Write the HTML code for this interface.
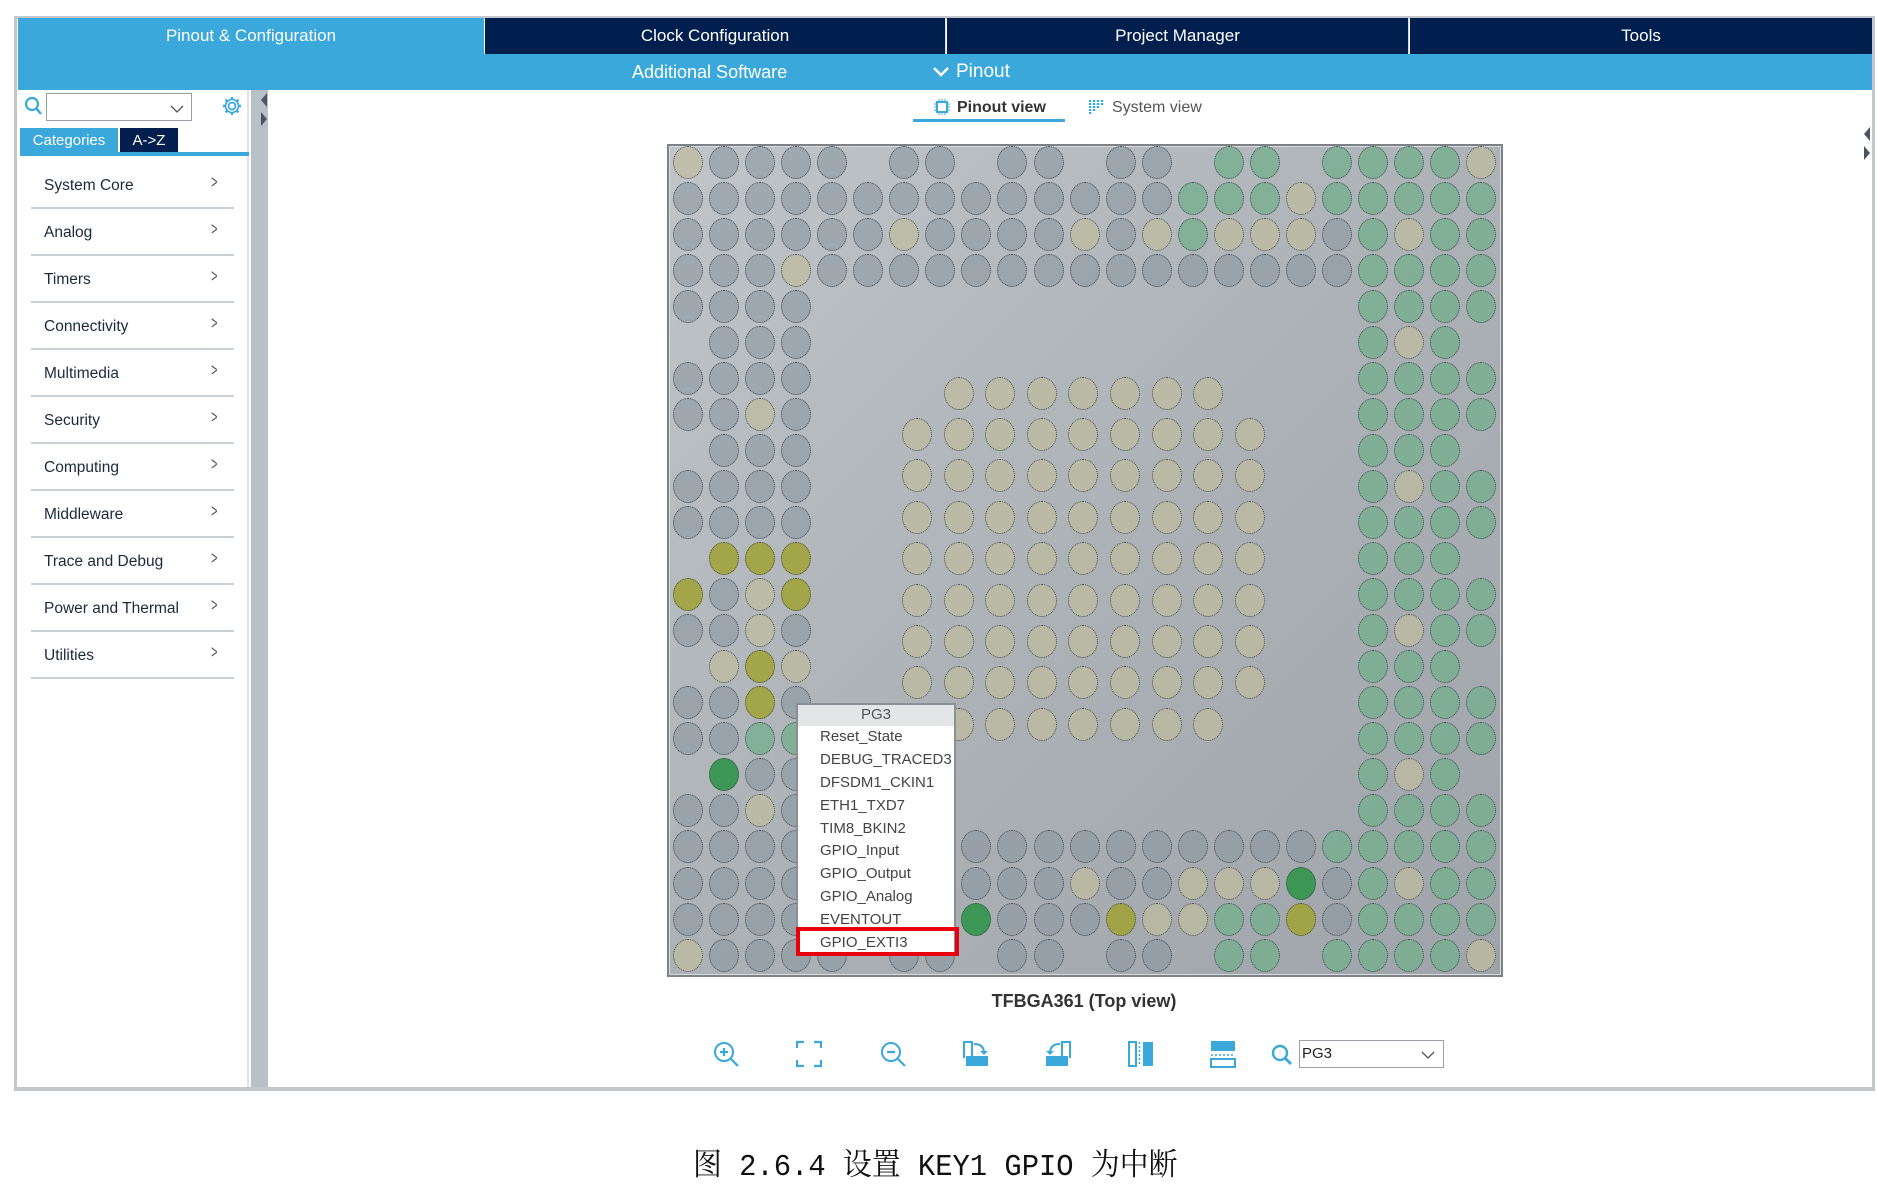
<!DOCTYPE html>
<html><head><meta charset="utf-8">
<style>
*{margin:0;padding:0;box-sizing:border-box}
body{width:1877px;height:1198px;background:#fff;position:relative;overflow:hidden;font-family:"Liberation Sans",sans-serif}
.abs{position:absolute}
#frame{left:14px;top:16px;width:1861px;height:1075px;border:3px solid #c3c7cb;border-bottom:4px solid #c3c7cb;background:#fff}
.tab{position:absolute;top:18px;height:36px;color:#fff;font-size:17px;text-align:center;line-height:36px}
.row2{left:18px;top:54px;width:1854px;height:36px;background:#3aa8db}
#left{left:18px;top:90px;width:231px;height:997px;background:#fff;border-right:2px solid #dfe3e6}
.item{position:absolute;left:13px;width:203px;height:47px;border-bottom:2px solid #c9d0d6;font-size:15.5px;color:#1b2a3a}
.item span{position:absolute;left:13px;top:15px}
.item i{position:absolute;right:14px;top:10px;font-style:normal;color:#555;font-size:18px;transform:scaleX(.6)}
#bar{left:251px;top:90px;width:17px;height:997px;background:#b7c1c8}
#chip{left:667px;top:144px;width:836px;height:833px;border:2px solid #7d8287;background:linear-gradient(135deg,#c0c5c9 0%,#acb2b6 50%,#9ea4a9 100%);box-shadow:inset 0 0 0 1px #d8dbde}
.pin{position:absolute;width:30px;height:33px;border-radius:50%;border:1.5px dotted #3f464c}
#pop{left:796px;top:703px;width:160px;height:253px;background:#fff;border:2px solid #8a9096}
#pop .h{height:21px;background:#e3e5e7;text-align:center;color:#555;font-size:15px;line-height:20px}
#pop .m{height:22.9px;padding-left:22px;font-size:15px;color:#444;line-height:22px;white-space:nowrap}
.tb{position:absolute;top:1040px}
</style></head><body>
<div id="frame" class="abs"></div>
<div class="tab" style="left:18px;width:466px;background:#3aa8db">Pinout &amp; Configuration</div>
<div class="tab" style="left:485px;width:461px;background:#001f4e;border-right:1px solid #cfd8e0">Clock Configuration</div>
<div class="tab" style="left:947px;width:462px;background:#001f4e;border-right:1px solid #cfd8e0">Project Manager</div>
<div class="tab" style="left:1410px;width:462px;background:#001f4e">Tools</div>
<div class="abs row2"></div>
<div class="abs" style="left:632px;top:62px;color:#fff;font-size:18px">Additional Software</div>
<div class="abs" style="left:932px;top:61px;color:#fff;font-size:19px"><svg width="18" height="14" style="vertical-align:middle;margin-right:6px"><path d="M2 3 L9 10 L16 3" stroke="#fff" stroke-width="2.5" fill="none"/></svg>Pinout</div>

<div id="left" class="abs">
  <svg class="abs" style="left:6px;top:6px" width="20" height="22"><circle cx="8" cy="8" r="6" stroke="#3aa8db" stroke-width="2.2" fill="none"/><path d="M12 12 L17 18" stroke="#3aa8db" stroke-width="2.5"/></svg>
  <div class="abs" style="left:28px;top:3px;width:146px;height:28px;border:1px solid #9aa0a5;background:#fff"></div>
  <svg class="abs" style="left:152px;top:14px" width="14" height="10"><path d="M1 2 L7 8 L13 2" stroke="#555" stroke-width="1.3" fill="none"/></svg>
  <svg class="abs" style="left:203px;top:5px" width="22" height="22" viewBox="0 0 22 22"><circle cx="11" cy="11" r="3.5" stroke="#3aa8db" stroke-width="1.8" fill="none"/><path d="M11 2v3M11 17v3M2 11h3M17 11h3M4.6 4.6l2.2 2.2M15.2 15.2l2.2 2.2M4.6 17.4l2.2-2.2M15.2 6.8l2.2-2.2" stroke="#3aa8db" stroke-width="2.4"/><circle cx="11" cy="11" r="6.5" stroke="#3aa8db" stroke-width="1.6" fill="none"/></svg>
  <div class="abs" style="left:2px;top:38px;width:98px;height:25px;background:#3aa8db;color:#fff;font-size:15px;text-align:center;line-height:25px">Categories</div>
  <div class="abs" style="left:102px;top:38px;width:58px;height:25px;background:#001f4e;color:#fff;font-size:15px;text-align:center;line-height:25px">A-&gt;Z</div>
  <div class="abs" style="left:2px;top:62px;width:229px;height:4px;background:#3aa8db"></div>
  <div class="item" style="top:72px"><span>System Core</span><i>&gt;</i></div>
  <div class="item" style="top:119px"><span>Analog</span><i>&gt;</i></div>
  <div class="item" style="top:166px"><span>Timers</span><i>&gt;</i></div>
  <div class="item" style="top:213px"><span>Connectivity</span><i>&gt;</i></div>
  <div class="item" style="top:260px"><span>Multimedia</span><i>&gt;</i></div>
  <div class="item" style="top:307px"><span>Security</span><i>&gt;</i></div>
  <div class="item" style="top:354px"><span>Computing</span><i>&gt;</i></div>
  <div class="item" style="top:401px"><span>Middleware</span><i>&gt;</i></div>
  <div class="item" style="top:448px"><span>Trace and Debug</span><i>&gt;</i></div>
  <div class="item" style="top:495px"><span>Power and Thermal</span><i>&gt;</i></div>
  <div class="item" style="top:542px"><span>Utilities</span><i>&gt;</i></div>
</div>
<div id="bar" class="abs"></div>
<svg class="abs" style="left:259px;top:92px" width="10" height="36"><path d="M8 1 L2 8 L8 15Z" fill="#4a5560"/><path d="M2 20 L8 27 L2 34Z" fill="#4a5560"/></svg>
<svg class="abs" style="left:1862px;top:126px" width="10" height="36"><path d="M8 1 L2 8 L8 15Z" fill="#4a5560"/><path d="M2 20 L8 27 L2 34Z" fill="#4a5560"/></svg>

<svg class="abs" style="left:934px;top:99px" width="16" height="16"><rect x="3" y="3" width="10" height="10" fill="none" stroke="#3aa8db" stroke-width="2"/><path d="M5 0v3M8 0v3M11 0v3M5 13v3M8 13v3M11 13v3M0 5h3M0 8h3M0 11h3M13 5h3M13 8h3M13 11h3" stroke="#3aa8db"/></svg>
<div class="abs" style="left:957px;top:99px;font-size:16px;font-weight:bold;color:#333">Pinout view</div>
<div class="abs" style="left:913px;top:119px;width:152px;height:3px;background:#3aa8db"></div>
<svg class="abs" style="left:1089px;top:99px" width="16" height="16"><path d="M1 1v14M5 1v11M9 1v8M13 1v5" stroke="#3aa8db" stroke-width="2.5" stroke-dasharray="2 1"/></svg>
<div class="abs" style="left:1112px;top:99px;font-size:16px;color:#555">System view</div>

<div id="chip" class="abs"></div>
<div id="pins"></div>

<div id="pop" class="abs">
  <div class="h">PG3</div>
  <div class="m">Reset_State</div>
  <div class="m">DEBUG_TRACED3</div>
  <div class="m">DFSDM1_CKIN1</div>
  <div class="m">ETH1_TXD7</div>
  <div class="m">TIM8_BKIN2</div>
  <div class="m">GPIO_Input</div>
  <div class="m">GPIO_Output</div>
  <div class="m">GPIO_Analog</div>
  <div class="m">EVENTOUT</div>
  <div class="m">GPIO_EXTI3</div>
</div>
<div class="abs" style="left:796px;top:927px;width:163px;height:29px;border:4px solid #e8000b"></div>

<div class="abs" style="left:884px;top:991px;width:400px;text-align:center;font-size:18px;font-weight:bold;color:#333">TFBGA361 (Top view)</div>

<svg class="tb" style="left:712px" width="28" height="28"><circle cx="12" cy="12" r="9" stroke="#3aa8db" stroke-width="2" fill="none"/><path d="M18.5 18.5L26 26M12 8v8M8 12h8" stroke="#3aa8db" stroke-width="2.2"/></svg>
<svg class="tb" style="left:796px" width="26" height="28"><path d="M1 8V2h7M18 2h7v6M25 20v6h-7M8 26H1v-6" stroke="#3aa8db" stroke-width="2.2" fill="none"/></svg>
<svg class="tb" style="left:879px" width="28" height="28"><circle cx="12" cy="12" r="9" stroke="#3aa8db" stroke-width="2" fill="none"/><path d="M18.5 18.5L26 26M8 12h8" stroke="#3aa8db" stroke-width="2.2"/></svg>
<svg class="tb" style="left:962px" width="28" height="28"><path d="M2 18V2h8v16" stroke="#3aa8db" stroke-width="2" fill="none"/><rect x="4" y="16" width="22" height="10" fill="#3aa8db"/><path d="M12 4q10 0 10 9" stroke="#3aa8db" stroke-width="2" fill="none"/><path d="M18 11l4 4 4-4" fill="#3aa8db"/></svg>
<svg class="tb" style="left:1044px" width="28" height="28"><path d="M26 18V2h-8v16" stroke="#3aa8db" stroke-width="2" fill="none"/><rect x="2" y="16" width="22" height="10" fill="#3aa8db"/><path d="M16 4q-10 0-10 9" stroke="#3aa8db" stroke-width="2" fill="none"/><path d="M2 11l4 4 4-4" fill="#3aa8db"/></svg>
<svg class="tb" style="left:1127px" width="28" height="28"><rect x="2" y="2" width="7" height="24" stroke="#3aa8db" stroke-width="2" fill="none"/><rect x="16" y="2" width="10" height="24" fill="#3aa8db"/><path d="M12.5 2v24" stroke="#3aa8db" stroke-width="1.5" stroke-dasharray="2 2"/></svg>
<svg class="tb" style="left:1209px" width="28" height="28"><rect x="2" y="1" width="24" height="10" fill="#3aa8db"/><rect x="2" y="19" width="24" height="8" stroke="#3aa8db" stroke-width="2" fill="none"/><path d="M2 15h24" stroke="#3aa8db" stroke-width="1.5" stroke-dasharray="2 2"/></svg>
<svg class="tb" style="left:1270px;top:1043px" width="24" height="24"><circle cx="10" cy="10" r="7" stroke="#3aa8db" stroke-width="2.4" fill="none"/><path d="M15 15l6 6" stroke="#3aa8db" stroke-width="2.8"/></svg>
<div class="abs" style="left:1299px;top:1040px;width:145px;height:28px;border:1px solid #9aa0a5;font-size:15px;line-height:26px;padding-left:2px;color:#222">PG3</div>
<svg class="abs" style="left:1421px;top:1050px" width="14" height="10"><path d="M1 2 L7 8 L13 2" stroke="#555" stroke-width="1.3" fill="none"/></svg>

<div class="abs" style="left:693px;top:1139px;font-size:31px;color:#111;font-family:'Liberation Mono','Noto Serif CJK SC',serif;white-space:nowrap;transform:scaleX(.93);transform-origin:left top">图 2.6.4 设置 KEY1 GPIO 为中断</div>

<script>
var rows=[
"vgggg.gg.gg.gg.nn.nnnnv",
"ggggggggggggggnnnvnnnnn",
"ggggggvggggvgvnvvvgnvnn",
"gggvgggggggggggggggnnnn",
"gggg...............nnnn",
".ggg...............nvn.",
"gggg...............nnnn",
"ggvg...............nnnn",
".ggg...............nnn.",
"gggg...............nvnn",
"gggg...............nnnn",
".yyy...............nnn.",
"ygvy...............nnnn",
"ggvg...............nvnn",
".vyv...............nnn.",
"ggyg...............nnnn",
"ggnn...............nnnn",
".Ggg...............nvn.",
"ggvg...............nnnn",
"ggggggggggggggggggnnnnn",
"gggggggggggvggvvvGgnvnn",
"ggggggggGgggyvvnnygnnnn",
"vgggg.gg.gg.gg.nn.nnnnv"];
var col={g:"rgba(140,150,160,.6)",v:"rgba(190,188,160,.75)",n:"rgba(115,175,140,.75)",y:"rgba(160,162,52,.85)",G:"rgba(55,150,80,.95)"};
var h="";
for(var j=0;j<23;j++)for(var i=0;i<23;i++){var c=rows[j][i];if(c==".")continue;
var x=688+36.05*i-15,y=162+36.05*j-16.5;
h+='<div class="pin" style="left:'+x+'px;top:'+y+'px;background:'+col[c]+'"></div>';}
for(var r=0;r<9;r++)for(var k=0;k<9;k++){if((r==0||r==8)&&(k==0||k==8))continue;
var x=917+41.6*k-15,y=393+41.4*r-16.5;
h+='<div class="pin" style="left:'+x+'px;top:'+y+'px;background:'+col.v+'"></div>';}
document.getElementById("pins").innerHTML=h;
</script>
</body></html>
